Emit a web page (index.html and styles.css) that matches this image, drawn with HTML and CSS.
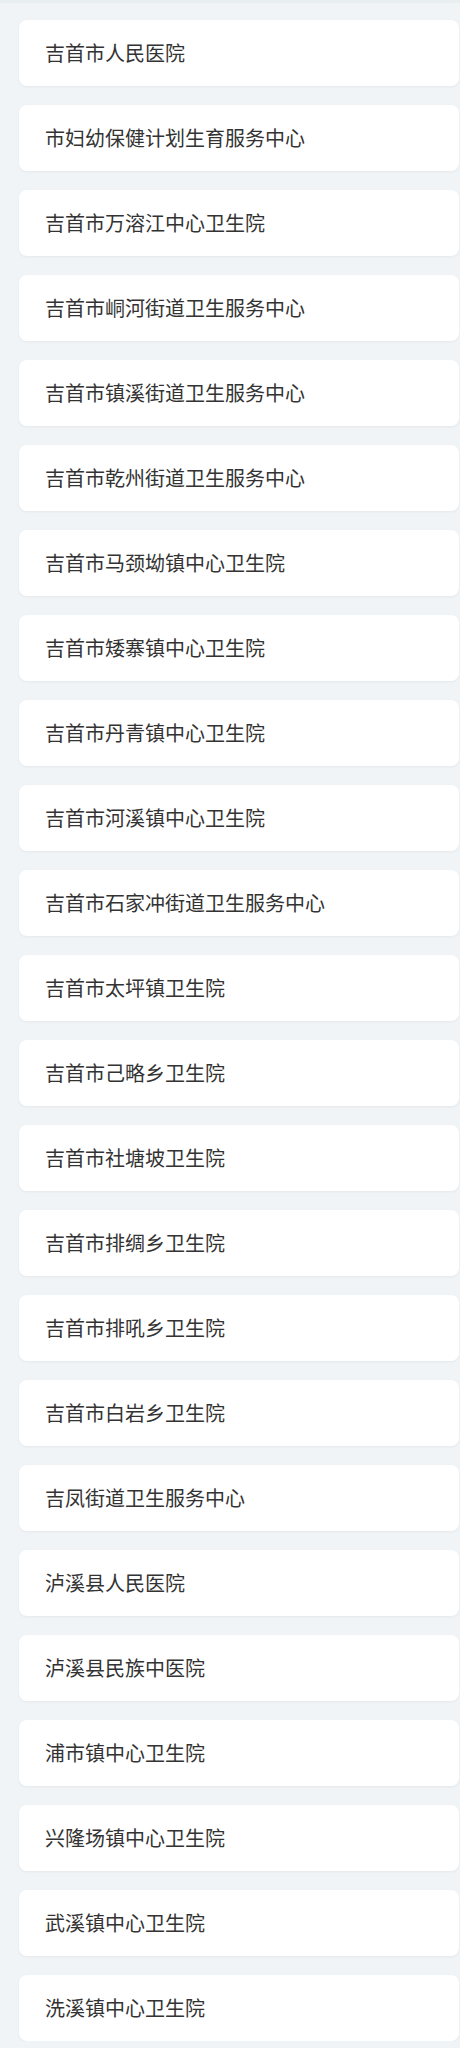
FILE: index.html
```html
<!DOCTYPE html>
<html lang="zh">
<head>
<meta charset="utf-8">
<link rel="stylesheet" href="styles.css">
</head>
<body>
<div class="topbar"></div>
<ul class="list">
  <li class="card">吉首市人民医院</li>
  <li class="card">市妇幼保健计划生育服务中心</li>
  <li class="card">吉首市万溶江中心卫生院</li>
  <li class="card">吉首市峒河街道卫生服务中心</li>
  <li class="card">吉首市镇溪街道卫生服务中心</li>
  <li class="card">吉首市乾州街道卫生服务中心</li>
  <li class="card">吉首市马颈坳镇中心卫生院</li>
  <li class="card">吉首市矮寨镇中心卫生院</li>
  <li class="card">吉首市丹青镇中心卫生院</li>
  <li class="card">吉首市河溪镇中心卫生院</li>
  <li class="card">吉首市石家冲街道卫生服务中心</li>
  <li class="card">吉首市太坪镇卫生院</li>
  <li class="card">吉首市己略乡卫生院</li>
  <li class="card">吉首市社塘坡卫生院</li>
  <li class="card">吉首市排绸乡卫生院</li>
  <li class="card">吉首市排吼乡卫生院</li>
  <li class="card">吉首市白岩乡卫生院</li>
  <li class="card">吉凤街道卫生服务中心</li>
  <li class="card">泸溪县人民医院</li>
  <li class="card">泸溪县民族中医院</li>
  <li class="card">浦市镇中心卫生院</li>
  <li class="card">兴隆场镇中心卫生院</li>
  <li class="card">武溪镇中心卫生院</li>
  <li class="card">洗溪镇中心卫生院</li>
</ul>
</body>
</html>
```
FILE: styles.css
```css
html, body {
  margin: 0;
  padding: 0;
  background: #f1f4f6;
}
body {
  font-family: "Noto Sans CJK SC", "Noto Sans", sans-serif;
  color: #333;
}
.topbar {
  height: 3px;
  background: #e9eef1;
}
.list {
  list-style: none;
  margin: 0;
  padding: 17px 1px 0 19px;
  display: flex;
  flex-direction: column;
  gap: 19px;
}
.card {
  height: 66px;
  box-sizing: border-box;
  background: #fff;
  border-radius: 8px;
  box-shadow: 0 1px 3px rgba(0, 0, 0, 0.05);
  padding-left: 26px;
  display: flex;
  align-items: center;
  font-size: 20px;
  line-height: 1;
  color: #333;
}
```
